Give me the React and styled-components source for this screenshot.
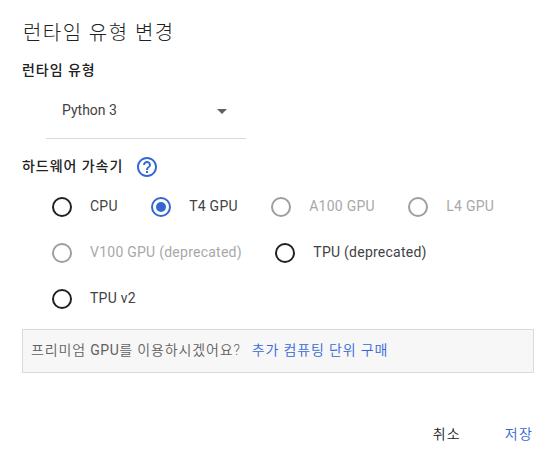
import React from "react";
import styled, { createGlobalStyle } from "styled-components";

const Global = createGlobalStyle`
  * { box-sizing: border-box; }
  body {
    margin: 0;
    background: #fff;
    color: #212121;
    font: 400 14px/20px Roboto, "Noto Sans CJK KR", sans-serif;
  }
`;

const Dialog = styled.main`
  width: 556px;
  height: 461px;
  padding: 17px 22px 0;
  display: flex;
  flex-direction: column;
  background: #fff;
`;

const Title = styled.h2`
  margin: 0;
  height: 31px;
  padding-left: 1px;
  font-size: 20px;
  line-height: 32px;
  font-weight: 300;
  letter-spacing: 1.45px;
`;

const Heading = styled.h3`
  margin: 0;
  display: flex;
  align-items: center;
  gap: 12px;
  height: 20px;
  font-size: 14px;
  line-height: 20px;
  font-weight: 500;
  letter-spacing: 0.95px;
  margin-top: ${(p) => p.$top};
`;

const Select = styled.div`
  width: 200px;
  height: 56px;
  margin: 3px 0 0 24px;
  padding: 0 19px 0 16px;
  display: flex;
  align-items: center;
  justify-content: space-between;
  border-bottom: 1px solid #dadada;
  color: #424242;
`;

const SelectValue = styled.span`
  padding-bottom: 2px;
`;

const Arrow = styled.svg`
  margin-top: 2px;
`;

const Options = styled.div`
  margin: 21px 0 0 30px;
  display: flex;
  flex-direction: column;
  gap: 26px;
`;

const OptionRow = styled.div`
  display: flex;
  gap: 33.4px;
`;

const Option = styled.label`
  display: flex;
  align-items: center;
  gap: 18px;
  height: 20px;
  letter-spacing: 0.25px;
  white-space: nowrap;
  color: ${(p) => (p.$disabled ? "#a8a8a8" : "#424242")};
`;

const OptionText = styled.span`
  padding-bottom: 1px;
  line-height: 19px;
`;

const Radio = styled.span`
  width: 20px;
  height: 20px;
  flex: none;
  display: grid;
  place-items: center;
  border-radius: 50%;
  border: 2px solid
    ${(p) => (p.$checked ? "#3367d6" : p.$disabled ? "#9e9e9e" : "#212121")};

  &::after {
    content: "";
    width: 10px;
    height: 10px;
    border-radius: 50%;
    background: ${(p) => (p.$checked ? "#3367d6" : "transparent")};
  }
`;

const Notice = styled.div`
  margin-top: 20px;
  height: 44px;
  padding: 0 8px 3px;
  display: flex;
  align-items: center;
  gap: 11px;
  border: 1px solid #dadada;
  background: #f7f7f7;
  color: #616161;
  font-weight: 350;
  white-space: nowrap;
  letter-spacing: 0.87px;
`;

const Latin = styled.span`
  font-weight: 400;
  letter-spacing: 0.5px;
`;

const BuyLink = styled.a`
  color: #3367d6;
`;

const Actions = styled.footer`
  margin-top: 51px;
  display: flex;
  justify-content: flex-end;
  gap: 44px;
  padding-right: 1px;
`;

const Action = styled.button`
  border: 0;
  padding: 0;
  background: none;
  font: inherit;
  font-weight: 350;
  line-height: 20px;
  letter-spacing: 1.2px;
  color: ${(p) => (p.$primary ? "#3367d6" : "#212121")};
`;

const rows = [
  [
    { label: "CPU" },
    { label: "T4 GPU", checked: true },
    { label: "A100 GPU", disabled: true },
    { label: "L4 GPU", disabled: true },
  ],
  [
    { label: "V100 GPU (deprecated)", disabled: true },
    { label: "TPU (deprecated)" },
  ],
  [{ label: "TPU v2" }],
];

const HelpMark = styled.svg`
  margin-top: 2px;
`;

const HelpIcon = () => (
  <HelpMark width="24" height="24" viewBox="0 0 24 24" fill="#3367d6">
    <path d="M11 18h2v-2h-2v2zm1-16C6.48 2 2 6.48 2 12s4.48 10 10 10 10-4.48 10-10S17.52 2 12 2zm0 18c-4.41 0-8-3.59-8-8s3.59-8 8-8 8 3.59 8 8-3.59 8-8 8zm0-14c-2.21 0-4 1.79-4 4h2c0-1.1.9-2 2-2s2 .9 2 2c0 2-3 1.75-3 5h2c0-2.25 3-2.5 3-5 0-2.21-1.79-4-4-4z" />
  </HelpMark>
);

export default function App() {
  return (
    <Dialog>
      <Global />
      <Title>런타임 유형 변경</Title>
      <Heading $top="12px">런타임 유형</Heading>
      <Select>
        <SelectValue>Python 3</SelectValue>
        <Arrow width="10" height="5" viewBox="0 0 10 5" fill="#616161">
          <path d="M0 0h10L5 5z" />
        </Arrow>
      </Select>
      <Heading $top="17px">
        하드웨어 가속기
        <HelpIcon />
      </Heading>
      <Options>
        {rows.map((row, i) => (
          <OptionRow key={i}>
            {row.map((o) => (
              <Option key={o.label} $disabled={o.disabled}>
                <Radio $checked={o.checked} $disabled={o.disabled} />
                <OptionText>{o.label}</OptionText>
              </Option>
            ))}
          </OptionRow>
        ))}
      </Options>
      <Notice>
        <span>
          프리미엄 <Latin>GPU</Latin>를 이용하시겠어요?
        </span>
        <BuyLink>추가 컴퓨팅 단위 구매</BuyLink>
      </Notice>
      <Actions>
        <Action>취소</Action>
        <Action $primary>저장</Action>
      </Actions>
    </Dialog>
  );
}
